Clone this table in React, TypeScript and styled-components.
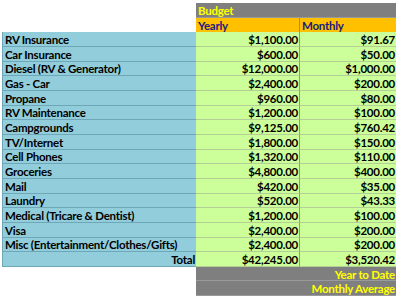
import { Fragment } from 'react';
import styled, { createGlobalStyle } from 'styled-components';

const GlobalStyle = createGlobalStyle`
  html, body {
    margin: 0;
    padding: 0;
    background: #ffffff;
  }
  body {
    font-family: Lato, 'Liberation Sans', sans-serif;
  }
`;

const Sheet = styled.div`
  display: grid;
  grid-template-columns: 194px 104px 96px;
  grid-auto-rows: 14.67px;
  padding: 3px 0 0 2px;
  font-weight: 700;
  font-size: 11.5px;
  letter-spacing: -0.25px;
`;

const Blank = styled.div``;

const Band = styled.div<{ span?: number; right?: boolean }>`
  grid-column: span ${({ span }) => span ?? 1};
  background: #7f7f7f;
  color: #ffff00;
  display: flex;
  align-items: center;
  justify-content: ${({ right }) => (right ? 'flex-end' : 'flex-start')};
  padding: 1px 1px 0 2px;
  border-bottom: 1px solid #9a9a9a;
  box-sizing: border-box;
  white-space: nowrap;
`;

const Heading = styled.div<{ first?: boolean }>`
  background: #ffc000;
  color: #1a1a80;
  display: flex;
  align-items: center;
  padding: 1px 2px 0;
  box-sizing: border-box;
  border-right: ${({ first }) => (first ? '1px solid #b08a30' : 'none')};
`;

const Label = styled.div<{ right?: boolean }>`
  background: #92cddc;
  color: #000000;
  display: flex;
  align-items: center;
  justify-content: ${({ right }) => (right ? 'flex-end' : 'flex-start')};
  padding: 1px 1px 0 2px;
  box-sizing: border-box;
  border-bottom: 1px solid #6fa6b8;
  border-left: 1px solid #6fa6b8;
  white-space: nowrap;
`;

const Amount = styled.div<{ first?: boolean }>`
  background: #ccff99;
  color: #000000;
  display: flex;
  align-items: center;
  justify-content: flex-end;
  padding: 1px 1px 0;
  box-sizing: border-box;
  border-bottom: 1px solid #b4cf96;
  border-right: ${({ first }) => (first ? '1px solid #8e9c80' : 'none')};
`;

const rows: [string, string, string][] = [
  ['RV Insurance', '$1,100.00', '$91.67'],
  ['Car Insurance', '$600.00', '$50.00'],
  ['Diesel (RV & Generator)', '$12,000.00', '$1,000.00'],
  ['Gas - Car', '$2,400.00', '$200.00'],
  ['Propane', '$960.00', '$80.00'],
  ['RV Maintenance', '$1,200.00', '$100.00'],
  ['Campgrounds', '$9,125.00', '$760.42'],
  ['TV/Internet', '$1,800.00', '$150.00'],
  ['Cell Phones', '$1,320.00', '$110.00'],
  ['Groceries', '$4,800.00', '$400.00'],
  ['Mail', '$420.00', '$35.00'],
  ['Laundry', '$520.00', '$43.33'],
  ['Medical (Tricare & Dentist)', '$1,200.00', '$100.00'],
  ['Visa', '$2,400.00', '$200.00'],
  ['Misc (Entertainment/Clothes/Gifts)', '$2,400.00', '$200.00'],
];

export default function App() {
  return (
    <>
      <GlobalStyle />
      <Sheet>
        <Blank />
        <Band span={2}>Budget</Band>
        <Blank />
        <Heading first>Yearly</Heading>
        <Heading>Monthly</Heading>
        {rows.map(([label, yearly, monthly]) => (
          <Fragment key={label}>
            <Label>{label}</Label>
            <Amount first>{yearly}</Amount>
            <Amount>{monthly}</Amount>
          </Fragment>
        ))}
        <Label right>Total</Label>
        <Amount first>$42,245.00</Amount>
        <Amount>$3,520.42</Amount>
        <Blank />
        <Band span={2} right>
          Year to Date
        </Band>
        <Blank />
        <Band span={2} right>
          Monthly Average
        </Band>
      </Sheet>
    </>
  );
}
